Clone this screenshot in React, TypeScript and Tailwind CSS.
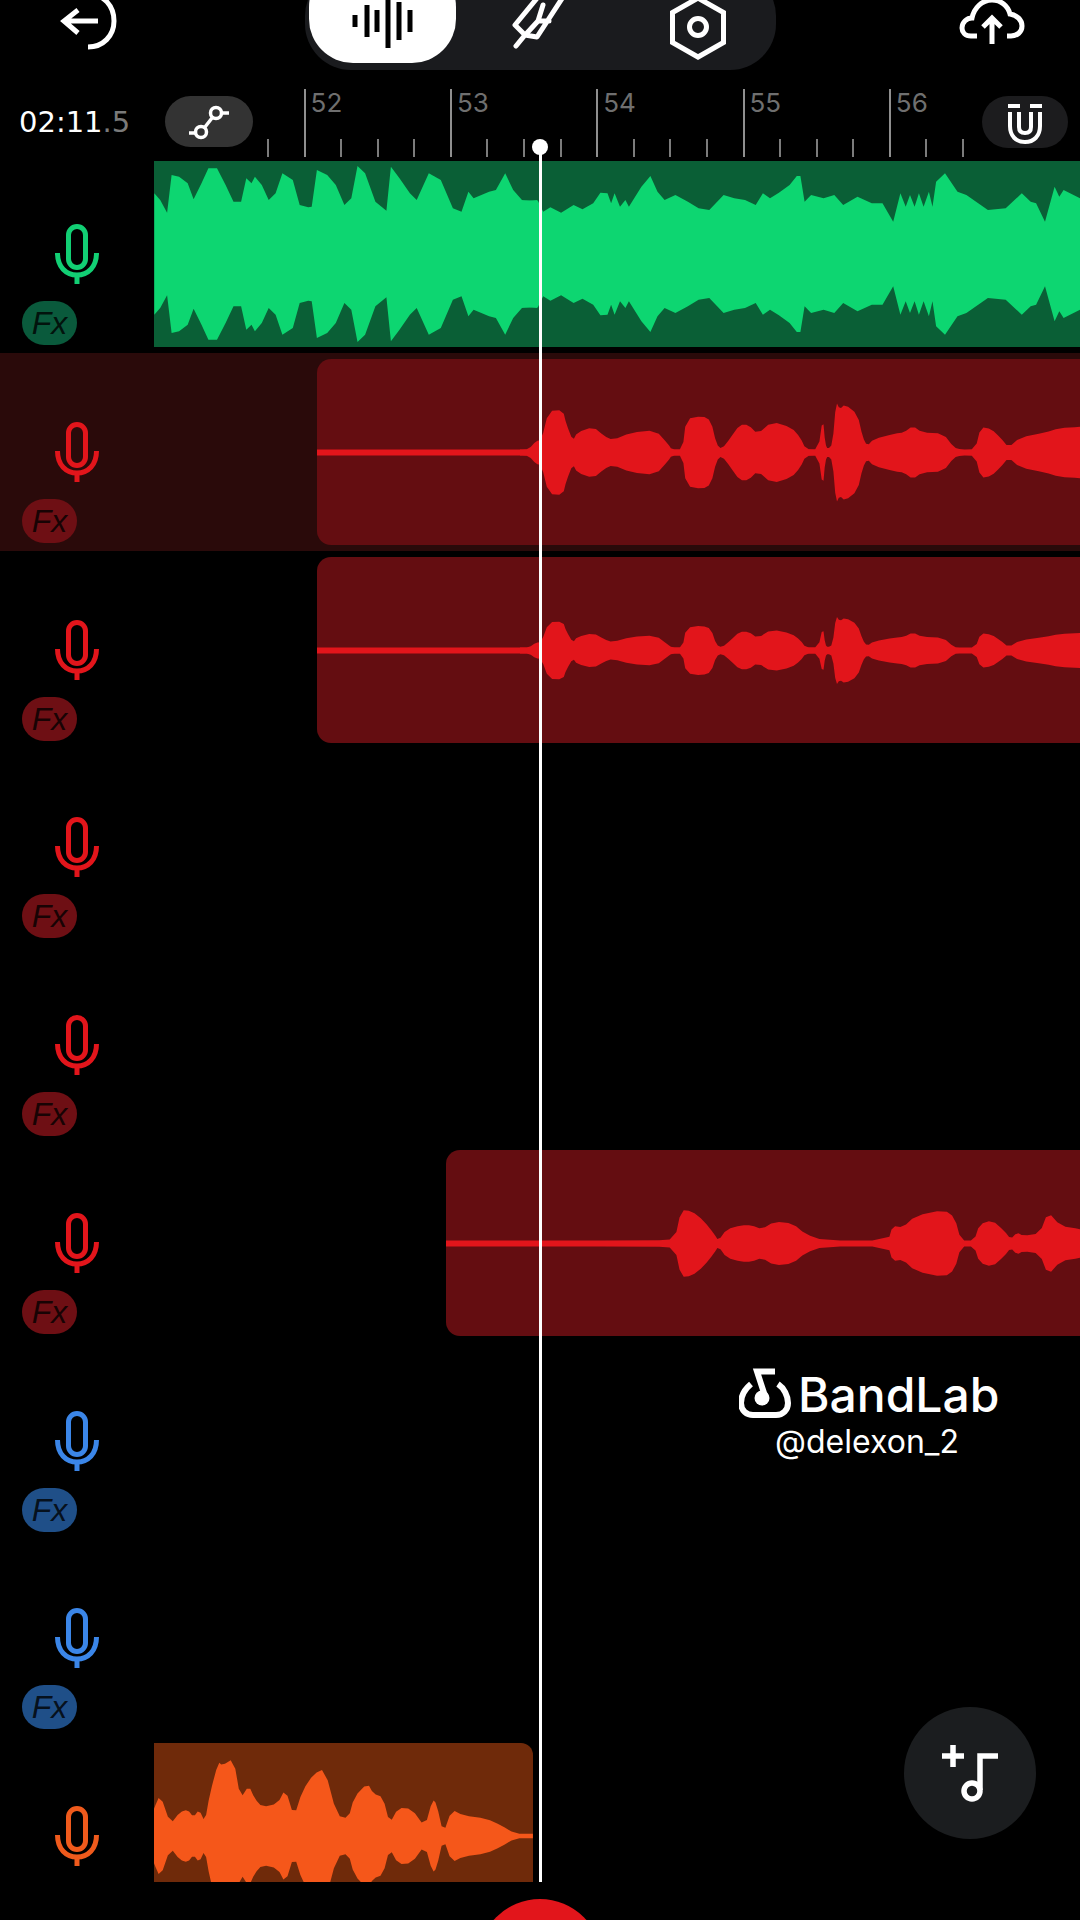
import React from "react";

type P = [number, number];

function chaikin(m: P[]): P[] {
  const out: P[] = [m[0]];
  for (let i = 0; i < m.length - 1; i++) {
    const [ax, ay] = m[i];
    const [bx, by] = m[i + 1];
    out.push([ax * 0.75 + bx * 0.25, ay * 0.75 + by * 0.25]);
    out.push([ax * 0.25 + bx * 0.75, ay * 0.25 + by * 0.75]);
  }
  out.push(m[m.length - 1]);
  return out;
}

// builds a mirrored wave polygon from traced edge points
function wave(pts: P[], sx: number, x0: number, cz: number, k: number, mid: number, minAmp = 0, smooth = false) {
  let m = pts.map(([x, y]) => [x / sx + x0, Math.max(((cz - y) / 3) * k, minAmp)] as P);
  if (smooth) m = chaikin(m);
  const top = m.map(([x, a]) => `${x.toFixed(1)},${(mid - a).toFixed(1)}`);
  const bot = [...m].reverse().map(([x, a]) => `${x.toFixed(1)},${(mid + a).toFixed(1)}`);
  return [...top, ...bot].join(" ");
}

const green1: P[] = [[448,130],[465,150],[485,188],[498,75],[520,80],[545,100],[562,148],[585,100],[605,55],[630,55],[655,105],[678,155],[700,155],[715,85],[730,100],[740,80],[760,105],[780,150],[800,130],[820,70],[850,90],[870,165],[895,172],[905,170],[920,60],[950,75],[975,105],[1000,165],[1020,145],[1038,48],[1060,70],[1090,155],[1122,182],[1135,50],[1160,85],[1190,130],[1210,150],[1245,70],[1280,90],[1315,175],[1340,185],[1360,125],[1375,145],[1420,125],[1440,120],[1467,70],[1490,120],[1520,155],[1560,150]];
const green2: P[] = [[0,150],[50,152],[65,185],[85,172],[115,188],[150,165],[175,178],[205,160],[225,128],[245,130],[255,160],[265,130],[280,170],[295,150],[305,170],[340,110],[365,78],[385,125],[405,150],[435,135],[470,155],[500,175],[530,180],[570,135],[600,145],[630,150],[660,165],[680,130],[700,145],[725,128],[755,105],[775,78],[785,78],[797,155],[815,135],[850,145],[880,135],[905,165],[945,140],[985,160],[1015,160],[1045,215],[1065,130],[1080,170],[1092,135],[1105,170],[1117,130],[1130,170],[1145,125],[1155,170],[1165,95],[1190,70],[1225,125],[1250,135],[1310,180],[1360,175],[1405,130],[1430,155],[1445,160],[1470,215],[1497,110],[1510,140],[1522,120],[1568,145]];
const red: P[] = [[0,897],[25,895],[45,870],[60,868],[80,780],[120,778],[130,820],[148,870],[160,845],[205,828],[235,855],[260,868],[310,845],[380,838],[415,880],[425,897],[455,897],[465,805],[510,795],[535,810],[550,880],[565,895],[590,860],[615,822],[640,822],[665,850],[705,812],[760,830],[785,860],[800,895],[835,897],[848,800],[855,880],[862,895],[875,880],[885,752],[895,775],[910,760],[945,790],[960,860],[972,885],[990,865],[1050,848],[1075,845],[1100,825],[1125,845],[1185,848],[1215,890],[1235,897],[1275,895],[1290,828],[1320,835],[1345,860],[1368,890],[1400,860],[1470,845],[1510,832],[1568,828]];
const red6: P[] = [[38,330],[540,330],[590,325],[605,238],[630,240],[660,270],[685,310],[695,330],[715,295],[750,283],[775,283],[800,295],[830,272],[875,278],[905,310],[950,330],[1105,330],[1115,285],[1140,290],[1170,255],[1240,237],[1265,260],[1280,330],[1312,330],[1325,280],[1355,268],[1385,300],[1400,325],[1415,305],[1430,315],[1470,308],[1490,243],[1520,285],[1568,295]];
const orange: P[] = [[402,325],[418,282],[445,372],[470,335],[490,328],[505,350],[520,328],[535,365],[548,280],[570,185],[580,195],[610,175],[628,295],[650,255],[665,295],[685,320],[725,310],[745,265],[768,350],[790,270],[820,220],[848,205],[880,345],[910,355],[925,290],[960,248],[975,280],[1000,290],[1018,370],[1040,322],[1075,325],[1110,380],[1130,297],[1140,310],[1158,400],[1180,328],[1210,345],[1270,355],[1310,375],[1345,400],[1392,400]];

function Mic({ className }: { className: string }) {
  return (
    <svg viewBox="0 0 44 60" className={`w-[44px] h-[60px] ${className}`} fill="none" stroke="currentColor" strokeWidth="5">
      <rect x="13.5" y="2.5" width="17" height="41" rx="8.5" />
      <path d="M2.5 29 C2.5 43 11 51 22 51 C33 51 41.5 43 41.5 29" />
      <path d="M22 50 V60" />
    </svg>
  );
}

function Fx({ className }: { className: string }) {
  return (
    <div className={`ml-[22px] mt-[17px] w-[55px] h-[44px] rounded-[23px] flex items-center justify-center text-[32px] italic text-black/80 font-['Liberation_Sans',sans-serif] ${className}`}>
      Fx
    </div>
  );
}

type ClipProps = { offset: string; bg: string; fill: string; polys: string[]; w: number; radius: string };

function Clip({ offset, bg, fill, polys, w, radius }: ClipProps) {
  return (
    <div className={`relative h-[186px] overflow-hidden ${offset} ${bg} ${radius}`}>
      <svg viewBox={`0 0 ${w} 186`} className={`absolute left-0 top-0 h-[186px] ${fill}`} width={w}>
        {polys.map((p, i) => <polygon key={i} points={p} fill="currentColor" />)}
      </svg>
    </div>
  );
}

function Track({ mic, fx, rowBg = "", clip }: { mic: string; fx?: string; rowBg?: string; clip?: ClipProps | null }) {
  return (
    <div className={`flex h-[197.75px] shrink-0 ${rowBg}`}>
      <div className="w-[154px] shrink-0 pt-[69px] flex flex-col">
        <Mic className={`ml-[55px] ${mic}`} />
        {fx && <Fx className={fx} />}
      </div>
      <div className="flex-1 pt-[6px] min-w-0">{clip && <Clip {...clip} />}</div>
    </div>
  );
}

// polygon helpers in clip-local coordinates
const greenPoly2 = wave(green2, 2.8, 520 - 154, 312, 1, 93);
const g1Shift = wave(green1.map(([x, y]) => [x - 447, y] as P), 2.904, 0, 312, 1, 93);

const redMain2 = wave(red, 2.8, 520 - 317, 905, 1, 93.5, 3, true);
const redMain3 = wave(red, 2.8, 520 - 317, 905, 0.68, 93.5, 3, true);
const redThin = wave([[0, 0], [610, 0]], 1, 0, 9, 1, 93.5);
const red6Poly = wave(red6.map(([x, y]) => [x - 38, y] as P), 2.412, 0, 338, 1, 93.5, 3, true);
const orangePoly = wave(orange.map(([x, y]) => [x - 402, y] as P), 2.613, 0, 407, 1, 93, 0, true);

const redClip = { bg: "bg-[#640d11]", fill: "text-[#e2151b]", radius: "rounded-l-[14px]" };

const ticks = Array.from({ length: 20 }, (_, i) => i);

export default function App() {
  return (
    <div className="relative w-[1080px] h-[1920px] bg-black overflow-hidden font-['Inter',sans-serif] text-white">
      <div className="relative h-[1882px] overflow-hidden">
        {/* Header */}
        <div className="h-[155px]">
          <div className="flex h-[70px] items-start">
            <svg viewBox="58 0 62 50" className="ml-[58px] w-[62px] h-[50px] overflow-visible" fill="none" stroke="white" strokeWidth="5">
              <path d="M98 21 H65 M78 10 L64 21 L78 33" />
              <path d="M88 -6 C104 -6 114 6 114 21 C114 36 103 47 88 47" />
            </svg>
            <div className="ml-[185px] -mt-[30px] w-[471px] h-[100px] rounded-[46px] bg-[#1a1b1e] flex items-end pl-[4px] pb-[7px]">
              <div className="w-[147px] h-[100px] rounded-[44px] bg-white shrink-0 flex items-end">
                <svg viewBox="309 0 147 63" className="w-[147px] h-[63px]" fill="none" stroke="black" strokeWidth="5">
                  <path d="M355 15 V27 M367 5 V37 M377 10 V32 M388 0 V48 M399 2 V40 M410 10 V32" />
                </svg>
              </div>
              <svg viewBox="500 0 65 63" className="ml-[44px] w-[65px] h-[63px] shrink-0 overflow-visible" fill="none" stroke="white" strokeWidth="5" strokeLinecap="round" strokeLinejoin="round">
                <path d="M516 46 L525 35 M538 -3 L515 25 L525 35 L537 37 L563 -3 M527 33 L538 21 H549 M538 21 L543 5" />
              </svg>
              <svg viewBox="668 -6 60 62" className="ml-[103px] w-[60px] h-[62px] shrink-0 mb-[1px] overflow-visible" fill="none" stroke="white" strokeWidth="5">
                <path d="M698 -8 L723.5 6.5 V36.5 L698 51 L672.5 36.5 V6.5 Z" />
                <circle cx="698" cy="21" r="8.5" />
              </svg>
            </div>
            <svg viewBox="960 0 64 46" className="ml-[184px] w-[64px] h-[46px] overflow-visible" fill="none" stroke="white" strokeWidth="5">
              <path d="M977 36 H971 C965 36 962 32 962 28 C962 22 967 18 972 18 C974 8 982 0 992 0 C1001 0 1008 6 1010 14 C1017 15 1022 20 1022 26 C1022 32 1017 36 1011 36 H1007" />
              <path d="M992 44 V19 M983 27 L992 18 L1001 27" />
            </svg>
          </div>
          <div className="flex h-[85px] items-start">
            <div className="ml-[19px] w-[146px] mt-[35px] text-[29px] leading-[34px] text-white whitespace-nowrap font-['DejaVu_Sans',sans-serif] font-normal">
              02:11<span className="text-[#7a7a7a]">.5</span>
            </div>
            <div className="mt-[26px] w-[88px] h-[51px] rounded-[26px] bg-[#333333] shrink-0">
              <svg viewBox="165 96 88 51" className="w-[88px] h-[51px]" fill="none" stroke="white" strokeWidth="3.5">
                <circle cx="216" cy="113" r="5.5" />
                <circle cx="201" cy="132" r="5.5" />
                <path d="M222 113 H229 M189 133 H195 M212 118 L205 127" />
              </svg>
            </div>
            <div className="ml-[14px] mt-[19px] flex w-[715px] h-[68px] items-end shrink-0">
              {ticks.map((i) => {
                const major = (i - 1) % 4 === 0;
                return (
                  <div key={i} className="relative w-[36.58px] shrink-0">
                    <div className={major ? "w-[2px] h-[68px] bg-[#8f8f8f]" : "w-[2px] h-[18px] bg-[#7c7c7c]"} />
                    {major && (
                      <span className="absolute left-[7px] bottom-[39px] text-[26px] leading-[30px] text-[#6f6f6f]">
                        {52 + (i - 1) / 4}
                      </span>
                    )}
                  </div>
                );
              })}
            </div>
            <div className="mt-[26px] w-[86px] h-[52px] rounded-[26px] bg-[#1c1c1e] shrink-0">
              <svg viewBox="982 96 86 52" className="w-[86px] h-[52px]" fill="none" stroke="white" strokeWidth="4">
                <path d="M1008 106 H1020 M1030 106 H1042" />
                <path d="M1010 112 V126 C1010 136 1016 142 1025 142 C1034 142 1040 136 1040 126 V112" />
                <path d="M1019 112 V127 C1019 131 1021 133 1025 133 C1029 133 1031 131 1031 127 V112" />
              </svg>
            </div>
          </div>
        </div>

        {/* Tracks */}
        <div className="flex flex-col">
          <Track
            mic="text-[#12cf74]"
            fx="bg-[#0a5a3c]"
            clip={{ offset: "", bg: "bg-[#0a5f36]", fill: "text-[#0dd671]", radius: "", w: 926, polys: [g1Shift, greenPoly2] }}
          />
          <Track
            mic="text-[#e2151b]"
            fx="bg-[#6e0f14]"
            rowBg="bg-[#2a0a0a]"
            clip={{ ...redClip, offset: "ml-[163px]", w: 763, polys: [redThin, redMain2] }}
          />
          <Track
            mic="text-[#e2151b]"
            fx="bg-[#6e0f14]"
            clip={{ ...redClip, offset: "ml-[163px]", w: 763, polys: [redThin, redMain3] }}
          />
          <Track mic="text-[#e2151b]" fx="bg-[#6e0f14]" />
          <Track mic="text-[#e2151b]" fx="bg-[#6e0f14]" />
          <Track
            mic="text-[#e2151b]"
            fx="bg-[#6e0f14]"
            clip={{ ...redClip, offset: "ml-[292px]", w: 634, polys: [red6Poly] }}
          />
          <Track mic="text-[#3b86e8]" fx="bg-[#1f4f88]" />
          <Track mic="text-[#3b86e8]" fx="bg-[#1f4f88]" />
          <Track
            mic="text-[#ef5a1c]"
            clip={{ offset: "w-[379px]", bg: "bg-[#6f2a0a]", fill: "text-[#f5571a]", radius: "rounded-tr-[12px]", w: 379, polys: [orangePoly] }}
          />
        </div>

        {/* Playhead */}
        <div className="absolute left-[539px] top-[147px] bottom-0 w-[3px] bg-white" />
        <div className="absolute left-[532px] top-[139px] w-[16px] h-[16px] rounded-full bg-white" />
      </div>

      {/* Watermark */}
      <div className="absolute left-[739px] top-[1366px] w-[262px] flex flex-col items-center">
        <div className="flex items-center h-[54px] w-full">
          <svg viewBox="739 1366 52 54" className="w-[52px] h-[54px] shrink-0" fill="none" stroke="white" strokeWidth="6">
            <path d="M751 1384 C745 1389 741 1396 741 1403 C741 1411 747 1415 753 1415 H776 C783 1415 788 1410 788 1403 C788 1396 784 1388 778 1384" />
            <path d="M775 1371.5 H757 L765 1396" />
            <circle cx="762" cy="1398" r="7.5" fill="white" stroke="none" />
          </svg>
          <span className="ml-[7px] mt-[4px] text-[48px] leading-[54px] font-medium whitespace-nowrap">BandLab</span>
        </div>
        <div className="mt-[4px] -ml-[6px] text-[32px] leading-[36px] whitespace-nowrap">@delexon_2</div>
      </div>

      {/* Add track */}
      <div className="absolute left-[904px] top-[1707px] w-[132px] h-[132px] rounded-full bg-[#1b1d1f]">
        <svg viewBox="904 1707 132 132" className="w-[132px] h-[132px]" fill="none" stroke="white" strokeWidth="5.5">
          <path d="M942 1756 H964 M953 1745 V1767" />
          <path d="M998 1756 H980 V1790" />
          <circle cx="972" cy="1791" r="8" />
        </svg>
      </div>

      {/* Record */}
      <div className="absolute left-[478px] top-[1899px] w-[124px] h-[124px] rounded-full bg-[#e2151b]" />
    </div>
  );
}
